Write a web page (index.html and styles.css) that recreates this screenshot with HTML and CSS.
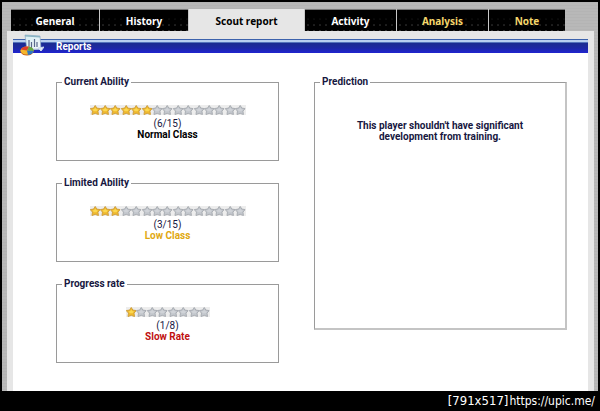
FILE: index.html
```
<!DOCTYPE html>
<html lang="en">
<head>
    <meta charset="UTF-8">
    <meta name="viewport" content="width=device-width, initial-scale=1.0">
    <title>Scout report</title>
    <link rel="stylesheet" href="styles.css">
</head>
<body>
    <svg class="defs" aria-hidden="true">
        <linearGradient id="pageFill" x1="0" y1="0" x2="1" y2="1">
            <stop offset="0" stop-color="#d5edf2"/>
            <stop offset="1" stop-color="#f4f8fc"/>
        </linearGradient>
        <symbol id="star" viewBox="0 0 21 21" preserveAspectRatio="none">
            <path d="M10.5 1l3.2 5.5 6.8 1-4.5 5.3 1 7.2-6.5-2.5-6.5 2.5 1-7.2L.5 7.500l6.800-1z" stroke-width="2" stroke-linejoin="round"/>
            <path class="shine" d="M10.5 5l1.8 3.5 3.7.8-2.8 3.7H7.800L5 9.300l3.700-.8z" stroke="none"/>
        </symbol>
    </svg>

    <div class="frame">
        <nav class="tabs">
            <a href="#" class="tab">General</a>
            <a href="#" class="tab">History</a>
            <a href="#" class="tab wide active">Scout report</a>
            <a href="#" class="tab medium">Activity</a>
            <a href="#" class="tab medium premium">Analysis</a>
            <a href="#" class="tab small premium">Note</a>
        </nav>

        <main class="panel">
            <header class="title-bar">
                <svg class="report-icon" viewBox="0 0 24 22" aria-hidden="true">
                    <path d="M5 1l15 1 1 13-14 1z" fill="url(#pageFill)" stroke="#8fa9c4" stroke-width=".7"/>
                    <path d="M5 1l15 1v1.500L5 2.500z" fill="#8bb5c4"/>
                    <path d="M9 13V6M11.500 14V8M14.500 13V5M17 13V8" stroke="#59688c" stroke-width="1.200" fill="none"/>
                    <path d="M7 15h14M18 14l6-1-3 4z" stroke="#c9d8ec" fill="#e8f0fa"/>
                    <ellipse cx="7" cy="17.500" rx="6.500" ry="4" fill="#c8641e"/>
                    <ellipse cx="7" cy="16.500" rx="6.500" ry="4" fill="#f5b62a"/>
                    <path d="M7 16.500L.8 15.500C2 12.500 6 12 9 12.700z" fill="#e0402a"/>
                    <path d="M7 16.500l2-3.800c3 .5 5 2 4.500 4.300z" fill="#63a846"/>
                    <path d="M7 16.500l6.500.5c-.3 2-2.500 3.800-5.500 4z" fill="#2f78c4"/>
                </svg>
                <h1>Reports</h1>
            </header>

            <div class="reports">
                <div class="abilities">
                    <fieldset class="box">
                        <legend>Current Ability</legend>
                        <div class="stars" data-value="6" data-max="15"></div>
                        <p class="score">(6/15)</p>
                        <p class="rating">Normal Class</p>
                    </fieldset>
                    <fieldset class="box">
                        <legend>Limited Ability</legend>
                        <div class="stars" data-value="3" data-max="15"></div>
                        <p class="score">(3/15)</p>
                        <p class="rating low">Low Class</p>
                    </fieldset>
                    <fieldset class="box">
                        <legend>Progress rate</legend>
                        <div class="stars short" data-value="1" data-max="8"></div>
                        <p class="score">(1/8)</p>
                        <p class="rating slow">Slow Rate</p>
                    </fieldset>
                </div>
                <fieldset class="box prediction">
                    <legend>Prediction</legend>
                    <p>This player shouldn't have significant<br>development from training.</p>
                </fieldset>
            </div>
        </main>
    </div>

    <footer class="credit"><span class="size">[791x517]</span><span>https://upic.me/</span></footer>

    <script src="script.js"></script>
</body>
</html>
```
FILE: styles.css
```
* {
    margin: 0;
    padding: 0;
    box-sizing: border-box;
}

body {
    min-height: 100vh;
    display: flex;
    flex-direction: column;
    background: #000;
    color: #17173f;
    font-family: Roboto, sans-serif;
    font-size: 10px;
    line-height: 11px;
}

.defs {
    position: absolute;
    width: 0;
    height: 0;
}

.frame {
    flex: 1;
    display: flex;
    flex-direction: column;
    margin: 2px 2px 0;
    padding: 7px 4px 0 5px;
    background: repeating-linear-gradient(#b4b4b4 0 1px, #b8b8b8 1px 3px);
}

.tabs {
    display: flex;
    gap: 1px;
    margin: 0 29px 0 4px;
    background: #c8c8c8;
}

.tab {
    flex: 88;
    height: 22px;
    line-height: 22px;
    border-top: 1px solid #777;
    background: linear-gradient(#000 30%, transparent), radial-gradient(circle, #303030 1px, transparent 1px) 0 0 / 6px 6px, #000;
    color: #fff;
    font-family: "Noto Sans", sans-serif;
    font-weight: bold;
    text-align: center;
    text-decoration: none;
}

.tab.wide {
    flex: 115;
}

.tab.medium {
    flex: 91;
}

.tab.small {
    flex: 76;
}

.tab.active {
    background: #e6e6e6;
    border-color: #e6e6e6;
    color: #000;
}

.tab.premium {
    color: #f5d76c;
}

.panel {
    flex: 1;
    padding: 8px 6px 0;
    background: linear-gradient(#fff, #fff) 6px 8px / calc(100% - 12px) 100% no-repeat, #e6e6e6;
}

.title-bar {
    position: relative;
    height: 14px;
    padding-left: 43px;
    border-top: 1px solid #3c62ac;
    background: linear-gradient(#b9d0f0 0 2px, #5474bc 2px 3px, #1b2c90 3px, #1d28a4 8px, #2024d0);
}

.title-bar h1 {
    color: #fff;
    font-size: 10px;
    line-height: 14px;
}

.report-icon {
    position: absolute;
    left: 7px;
    top: -6px;
    width: 24px;
    height: 22px;
}

.reports {
    display: grid;
    grid-template-columns: 223fr 253fr;
    gap: 35px;
    align-items: start;
    padding: 23px 21px 27px 43px;
}

.abilities {
    display: flex;
    flex-direction: column;
    gap: 16px;
}

.box {
    min-width: 0;
    min-height: 85px;
    padding: 17px 5px;
    border: 1px solid #9a9a9a;
    text-align: center;
}

.box legend {
    padding: 0 2px;
    font-weight: bold;
    line-height: 12px;
    text-align: left;
}

.stars {
    display: flex;
    width: 156px;
    height: 10px;
    margin: 0 auto 3px;
    background: #ededed;
}

.stars.short {
    width: 84px;
}

.star {
    flex: 1;
    min-width: 0;
    height: 10px;
    fill: #c3c7cd;
    stroke: #a8acb2;
    color: #d0d3d8;
}

.star.on {
    fill: #efb92e;
    stroke: #cf9f3c;
    color: #fbd850;
}

.shine {
    fill: currentColor;
}

.rating {
    color: #000;
    font-weight: bold;
}

.rating.low {
    color: #dfa810;
}

.rating.slow {
    color: #c01010;
}

.prediction {
    min-height: 254px;
    padding-top: 32px;
    border-right: 2px solid #c4c4c4;
    border-bottom: 2px solid #c4c4c4;
    font-weight: bold;
}

.credit {
    display: flex;
    justify-content: flex-end;
    gap: 1px;
    padding-right: 5px;
    color: #fff;
    font-family: "DejaVu Sans Condensed", "DejaVu Sans", sans-serif;
    font-size: 12px;
    line-height: 20px;
}

.credit .size {
    font-size: 13px;
}
```
FILE: script.js
```
// fill each rating row with stars
document.querySelectorAll('.stars').forEach((row) => {
    const value = Number(row.dataset.value);
    const max = Number(row.dataset.max);
    let html = '';
    for (let i = 0; i < max; i++) {
        html += `<svg class="star${i < value ? ' on' : ''}"><use href="#star"/></svg>`;
    }
    row.innerHTML = html;
});
```
